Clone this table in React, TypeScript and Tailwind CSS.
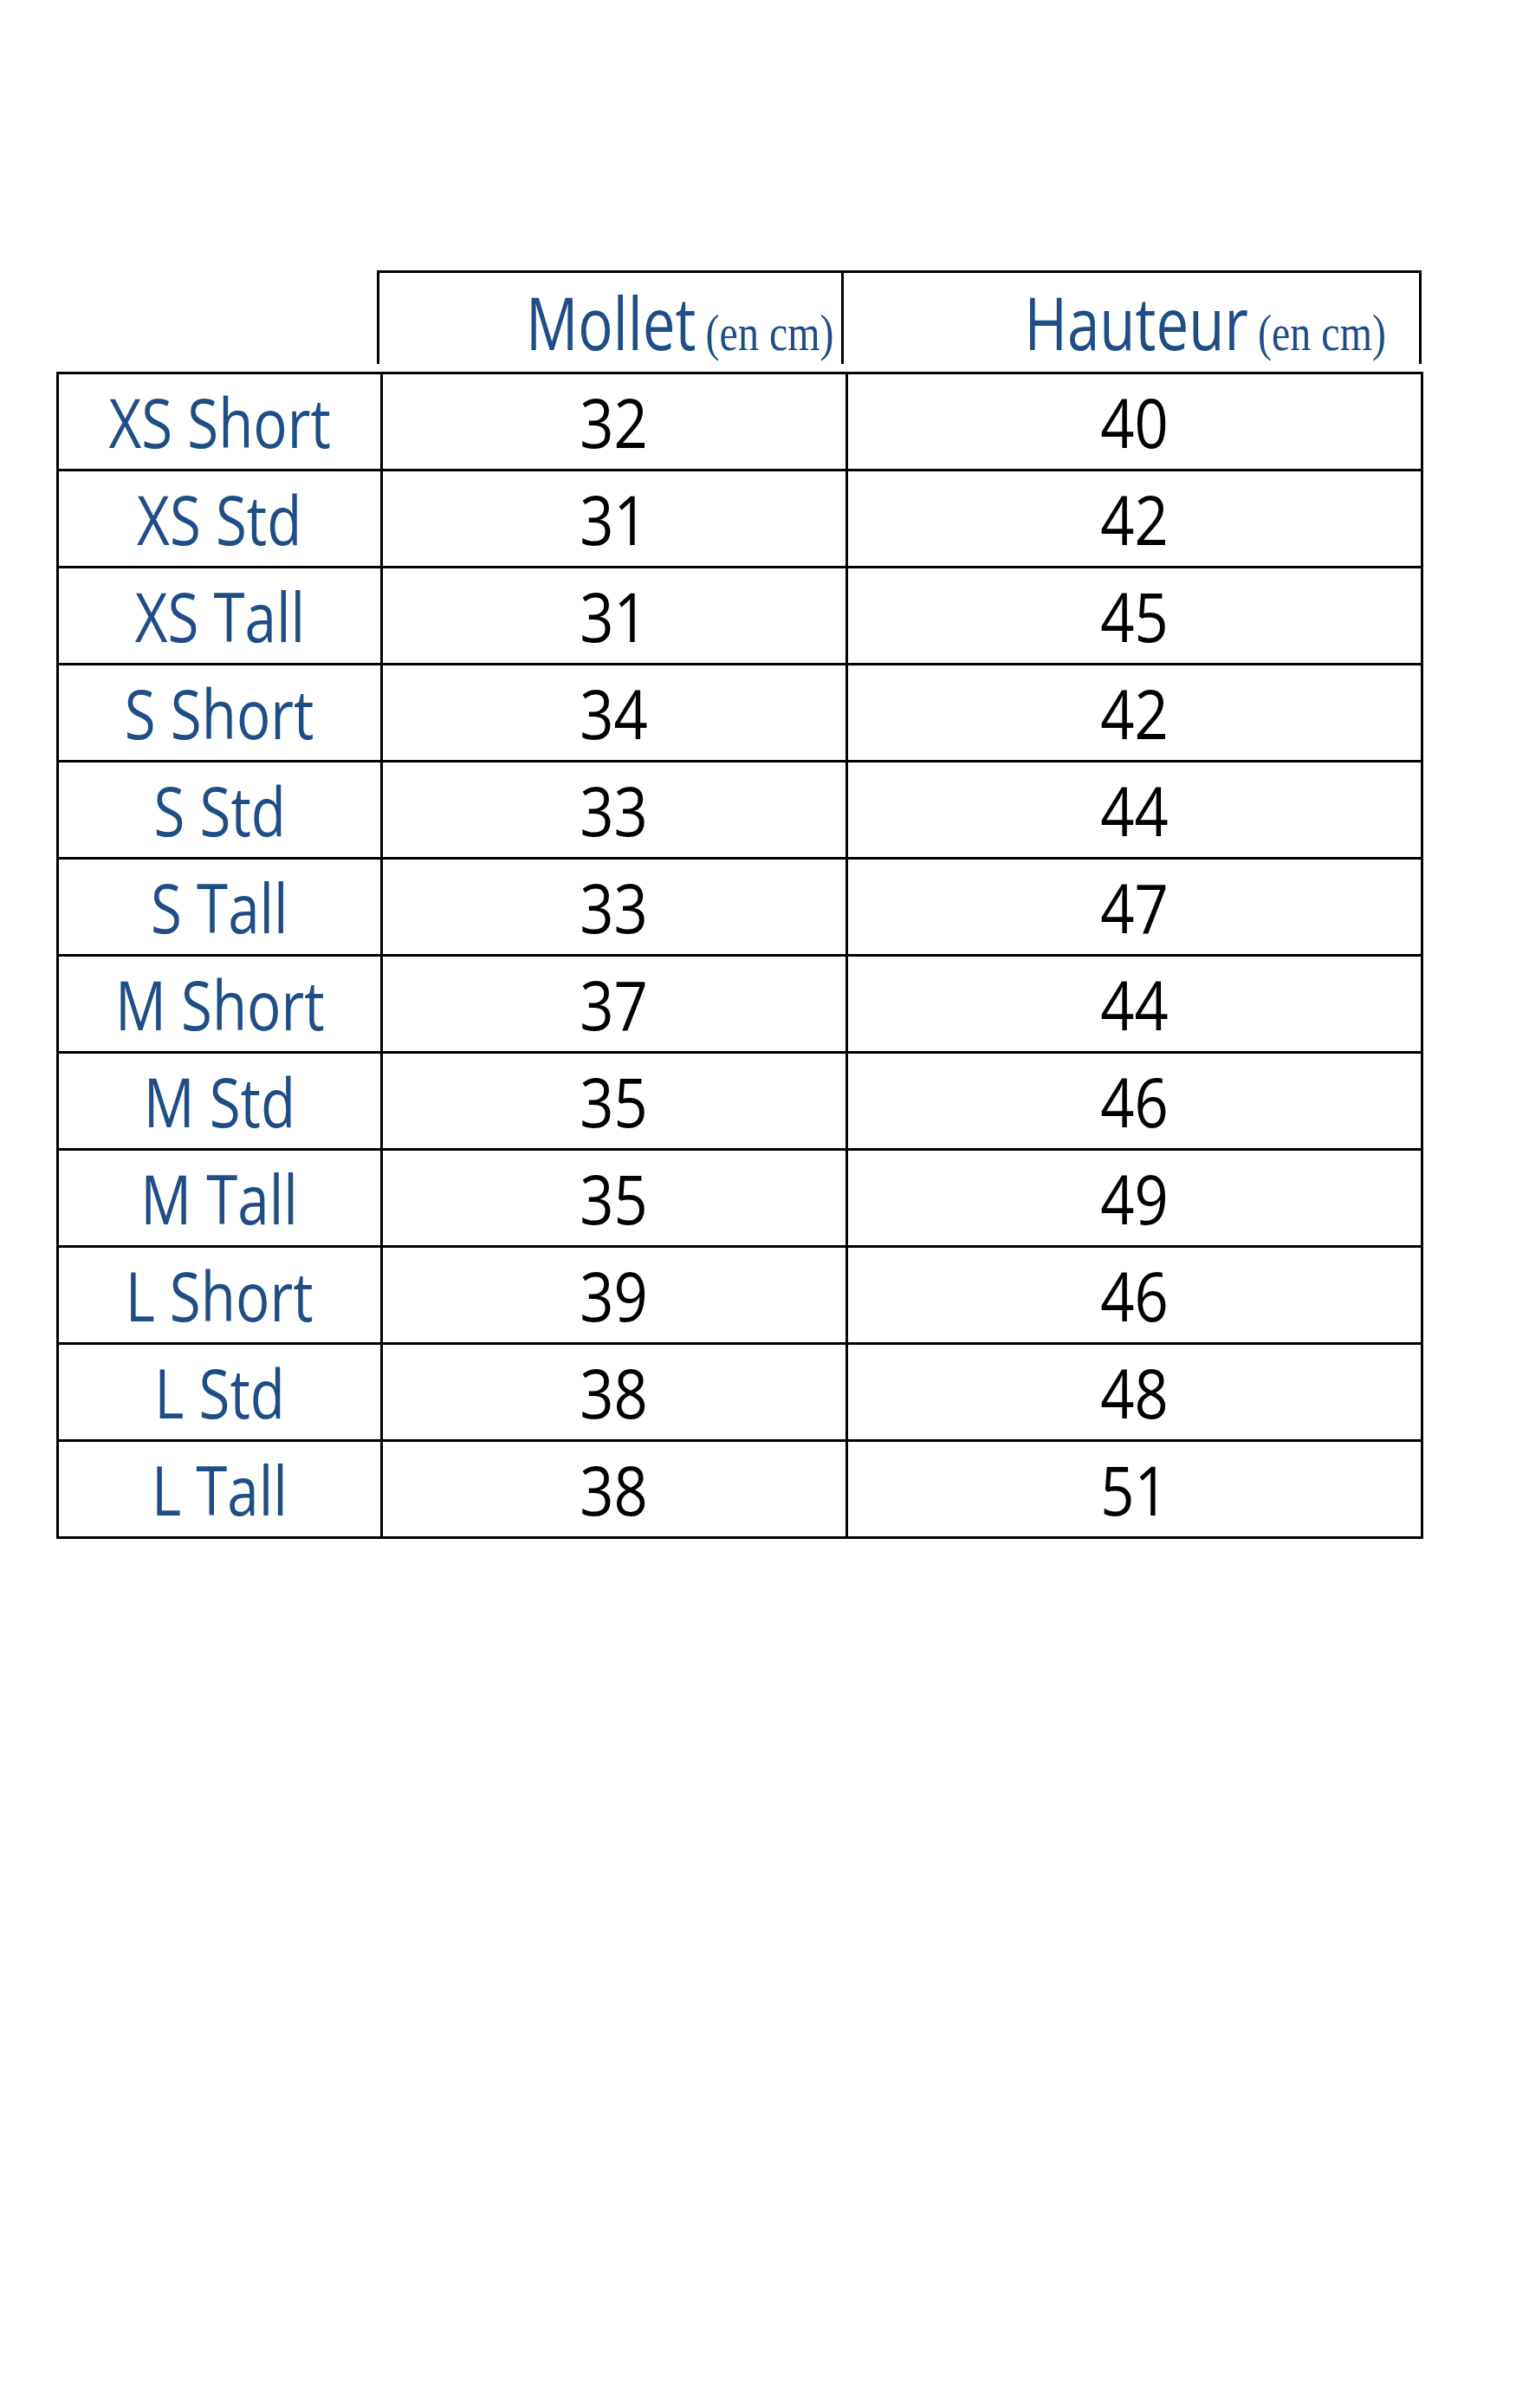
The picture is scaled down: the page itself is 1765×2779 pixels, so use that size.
const ROWS = [
  { size: "XS Short", mollet: 32, hauteur: 40 },
  { size: "XS Std", mollet: 31, hauteur: 42 },
  { size: "XS Tall", mollet: 31, hauteur: 45 },
  { size: "S Short", mollet: 34, hauteur: 42 },
  { size: "S Std", mollet: 33, hauteur: 44 },
  { size: "S Tall", mollet: 33, hauteur: 47 },
  { size: "M Short", mollet: 37, hauteur: 44 },
  { size: "M Std", mollet: 35, hauteur: 46 },
  { size: "M Tall", mollet: 35, hauteur: 49 },
  { size: "L Short", mollet: 39, hauteur: 46 },
  { size: "L Std", mollet: 38, hauteur: 48 },
  { size: "L Tall", mollet: 38, hauteur: 51 },
];

const SANS = "font-['Open_Sans',sans-serif]";
const SERIF = "font-['Liberation_Serif',serif]";

function HeaderLabel({ label }: { label: string }) {
  return (
    <span className="inline-flex origin-right scale-x-[0.8] items-baseline text-[#1f4e86]">
      <span className={`${SANS} text-[84px] leading-none`}>{label}</span>
      <span className={`${SERIF} ml-[14px] text-[60px] leading-none`}>(en cm)</span>
    </span>
  );
}

export default function App() {
  return (
    <div className="min-h-[2779px] w-full bg-white pl-[65px] pt-[312px]">
      <div className="ml-[370px] flex h-[108px] w-[1206px] border-l-[3px] border-t-[3px] border-black">
        <div className="flex w-[536px] items-end justify-end border-r-[3px] border-black pb-[6px] pr-[8px]">
          <HeaderLabel label="Mollet" />
        </div>
        <div className="flex flex-1 items-end justify-end border-r-[3px] border-black pb-[6px] pr-[38px]">
          <HeaderLabel label="Hauteur" />
        </div>
      </div>

      <div className="mt-[9px] grid w-[1578px] grid-cols-[374px_537px_1fr] border-l-[3px] border-t-[3px] border-black">
        {ROWS.map((row) => (
          <div key={row.size} className="contents">
            <div className="flex h-[112px] items-center justify-center border-b-[3px] border-r-[3px] border-black">
              <span className={`${SANS} inline-block scale-x-[0.84] text-[78px] font-medium leading-none text-[#1f4e86]`}>
                {row.size}
              </span>
            </div>
            <div className="flex h-[112px] items-center justify-center border-b-[3px] border-r-[3px] border-black">
              <span className={`${SANS} inline-block scale-x-[0.88] text-[78px] font-medium leading-none text-black`}>
                {row.mollet}
              </span>
            </div>
            <div className="flex h-[112px] items-center justify-center border-b-[3px] border-r-[3px] border-black">
              <span className={`${SANS} inline-block scale-x-[0.88] text-[78px] font-medium leading-none text-black`}>
                {row.hauteur}
              </span>
            </div>
          </div>
        ))}
      </div>
    </div>
  );
}
